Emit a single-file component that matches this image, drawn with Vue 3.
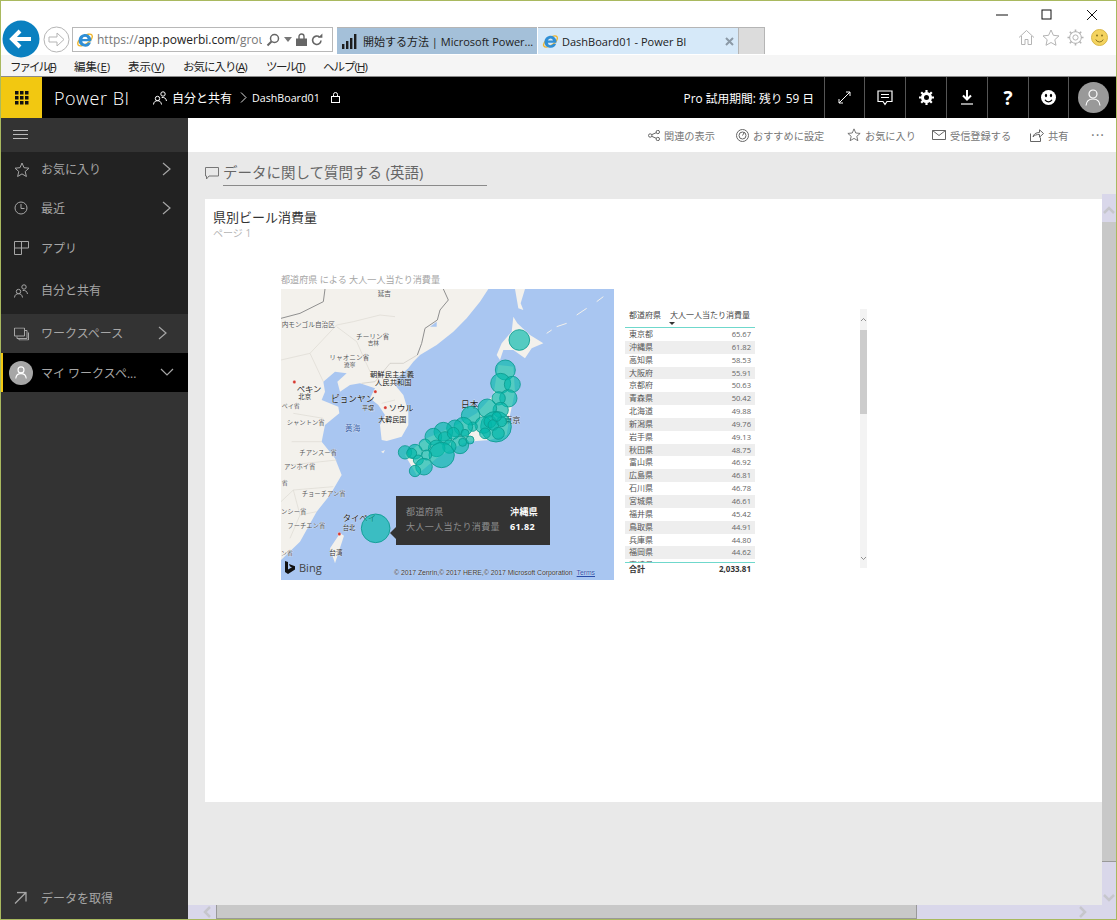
<script setup>
const menus = [
  { t: 'ファイル', k: 'F', w: 64, ls: '-2px' },
  { t: '編集', k: 'E', w: 54, ls: '0' },
  { t: '表示', k: 'V', w: 55, ls: '0' },
  { t: 'お気に入り', k: 'A', w: 83, ls: '-1px' },
  { t: 'ツール', k: 'T', w: 57, ls: '-1.6px' },
  { t: 'ヘルプ', k: 'H', w: 60, ls: '-1px' }
]
const rows = [
  ['東京都', '65.67'], ['沖縄県', '61.82'], ['高知県', '58.53'], ['大阪府', '55.91'], ['京都府', '50.63'],
  ['青森県', '50.42'], ['北海道', '49.88'], ['新潟県', '49.76'], ['岩手県', '49.13'], ['秋田県', '48.75'],
  ['富山県', '46.92'], ['広島県', '46.81'], ['石川県', '46.78'], ['宮城県', '46.61'], ['福井県', '45.42'],
  ['鳥取県', '44.91'], ['兵庫県', '44.80'], ['福岡県', '44.62'], ['宮崎県', '44.51']
]
const bubbles = [
  [718,165,31],[676,255,30],[662,295,30],[697,298,24],[685,340,26],[656,340,20],[662,375,23],[622,370,28],
  [572,392,28],[648,425,46],[610,420,25],[630,410,18],[640,420,16],[665,410,15],[650,395,14],[655,445,18],
  [615,445,16],[578,425,14],[550,425,28],[525,430,25],[555,445,12],[490,440,28],[460,455,25],[495,460,20],
  [520,445,18],[540,480,26],[548,472,12],[570,465,12],[508,485,20],[470,490,25],[485,510,38],[435,480,18],
  [440,510,15],[405,500,22],[375,502,20],[395,505,15],[415,525,15],[432,545,25],[405,558,17],[287,730,43]
]
const labels = [
  ['延吉', 293, 32, 20, '#555'], ['内モンゴル自治区', 5, 125, 20, '#555'], ['チーリン省', 228, 161, 20, '#555'],
  ['吉林', 263, 180, 17, '#555'], ['リャオニン省', 148, 226, 20, '#555'], ['遼寧', 192, 245, 17, '#555'],
  ['朝鮮民主主義', 270, 276, 22, '#222'], ['人民共和国', 285, 301, 22, '#222'], ['ペキン', 50, 321, 25, '#222'],
  ['北京', 55, 343, 19, '#333'], ['ピョンヤン', 153, 352, 26, '#222'], ['平壌', 246, 374, 18, '#333'],
  ['ソウル', 326, 378, 25, '#222'], ['大韓民国', 295, 412, 21, '#222'], ['黄海', 195, 439, 23, '#3b62a8'],
  ['日本', 543, 368, 26, '#222'], ['東京', 672, 414, 25, '#333'], ['ペイ省', 5, 370, 18, '#555'],
  ['シャントン省', 20, 419, 19, '#555'], ['チアンスー省', 58, 511, 19, '#555'], ['アンホイ省', 12, 552, 19, '#555'],
  ['チョーチアン省', 65, 634, 19, '#555'], ['ンシー省', 3, 688, 19, '#555'], ['フーチエン省', 22, 728, 19, '#555'],
  ['タイペイ', 188, 707, 25, '#222'], ['台北', 188, 735, 19, '#333'], ['台湾', 148, 811, 20, '#333'],
  ['ン省', 3, 810, 18, '#555'], ['省', 5, 600, 18, '#555']
]
const dots = [[43,291],[286,320],[316,368],[178,747]]
</script>

<template>
  <div class="window">
    <div class="caption">
      <svg class="caption-ico" width="12" height="2" viewBox="0 0 12 2"><path d="M0 1h12" stroke="#111"/></svg>
      <svg class="caption-ico" width="12" height="12" viewBox="0 0 12 12"><rect x="1" y="1" width="9" height="9" fill="none" stroke="#111"/></svg>
      <svg class="caption-ico" width="12" height="12" viewBox="0 0 12 12"><path d="M1 1l10 10M11 1L1 11" stroke="#111"/></svg>
    </div>

    <div class="navrow">
      <svg class="back" width="38" height="38" viewBox="0 0 38 38">
        <circle cx="19" cy="19" r="18.5" fill="#0a80c0"/>
        <path d="M29 19H11M18 11l-8 8 8 8" fill="none" stroke="#fff" stroke-width="4"/>
      </svg>
      <svg class="forward" width="27" height="27" viewBox="0 0 27 27">
        <circle cx="13.5" cy="13.5" r="12.5" fill="#fff" stroke="#b5b5b5"/>
        <path d="M6 11h8V7l7 6.5-7 6.5v-4H6z" fill="none" stroke="#b5b5b5"/>
      </svg>
      <div class="address">
        <svg width="18" height="18" viewBox="0 0 18 18">
          <ellipse cx="9" cy="9" rx="8.5" ry="4" fill="none" stroke="#f0b429" stroke-width="1.400" transform="rotate(-35 9 9)"/>
          <path d="M2.600 9.500a6.400 6.400 0 0 1 12.700-1.300v2H6.200a3 3 0 0 0 5.600 1.200h3.200A6.400 6.400 0 0 1 2.600 9.500zm3.700-1.600h5.400a2.800 2.800 0 0 0-5.400 0z" fill="#2f8fd6" fill-rule="evenodd"/>
        </svg>
        <span class="url"><i>https://</i>app.powerbi.com<i>/group</i></span>
        <svg class="addr-tool" width="14" height="14" viewBox="0 0 14 14"><circle cx="8.5" cy="5.5" r="4" fill="none" stroke="#666" stroke-width="1.5"/><path d="M5.5 8.5L1.5 12.5" stroke="#666" stroke-width="2"/></svg>
        <svg class="addr-tool" width="8" height="5" viewBox="0 0 8 5"><path d="M0 0h8L4 5z" fill="#777"/></svg>
        <svg class="addr-tool" width="11" height="13" viewBox="0 0 11 13"><path d="M3 6V3.5a2.5 2.5 0 0 1 5 0V6" fill="none" stroke="#666" stroke-width="1.4"/><rect y="5.5" width="11" height="7.5" fill="#666"/></svg>
        <svg class="addr-tool" width="12" height="13" viewBox="0 0 12 13"><path d="M10 7.5a4.2 4.2 0 1 1-1.4-3.4" fill="none" stroke="#666" stroke-width="1.6"/><path d="M7 4.8h4.4V.6z" fill="#666"/></svg>
      </div>
      <div class="tab tab-idle">
        <svg class="tab-ico" width="17" height="16" viewBox="0 0 17 16"><path d="M1 11h2.400v5H1zM5 8h2.400v8H5zM9 5h2.400v11H9zM13 1h2.400v15H13z" fill="#1d1d1d"/></svg>
        <span>開始する方法 | Microsoft Power...</span>
      </div>
      <div class="tab tab-active">
        <svg class="tab-ico" width="17" height="17" viewBox="0 0 18 18">
          <ellipse cx="9" cy="9" rx="8.5" ry="4" fill="none" stroke="#f0b429" stroke-width="1.400" transform="rotate(-35 9 9)"/>
          <path d="M2.600 9.500a6.400 6.400 0 0 1 12.700-1.300v2H6.200a3 3 0 0 0 5.600 1.200h3.200A6.400 6.400 0 0 1 2.600 9.500zm3.700-1.600h5.400a2.800 2.800 0 0 0-5.400 0z" fill="#2f8fd6" fill-rule="evenodd"/>
        </svg>
        <span class="tab-label">DashBoard01 - Power BI</span>
        <svg class="tab-ico" width="9" height="9" viewBox="0 0 9 9"><path d="M1 1l7 7M8 1L1 8" stroke="#8b99a6" stroke-width="2"/></svg>
      </div>
      <div class="tab-new"></div>
      <div class="tools">
        <svg width="17" height="17" viewBox="0 0 17 17"><path d="M1 8.5L8.5 1.5 16 8.5M3.5 7v8.500h3.500v-5h3v5h3.500V7" fill="none" stroke="#b4b4b4"/></svg>
        <svg width="18" height="17" viewBox="0 0 18 17"><path d="M9 1l2.400 5.300 5.600.6-4.200 3.800 1.200 5.600L9 13.500l-5 2.800 1.200-5.600L1 6.900l5.600-.6z" fill="none" stroke="#b4b4b4"/></svg>
        <svg width="17" height="17" viewBox="0 0 17 17"><circle cx="8.500" cy="8.500" r="2.600" fill="none" stroke="#b4b4b4"/><circle cx="8.500" cy="8.500" r="5.800" fill="none" stroke="#b4b4b4"/><path d="M8.500 .5v2.500M8.500 14v2.500M.5 8.500H3M14 8.500h2.500M2.800 2.800l1.800 1.800M12.400 12.400l1.800 1.800M14.200 2.800l-1.800 1.800M4.600 12.400l-1.800 1.800" stroke="#b4b4b4" stroke-width="1.600"/></svg>
        <svg width="17" height="17" viewBox="0 0 17 17"><circle cx="8.500" cy="8.500" r="8" fill="#f4d35e" stroke="#d9b84a"/><circle cx="6" cy="6.500" r="1" fill="#8a7420"/><circle cx="11" cy="6.500" r="1" fill="#8a7420"/><path d="M4.800 10.500a4 4 0 0 0 7.400 0" fill="none" stroke="#8a7420"/></svg>
      </div>
    </div>

    <div class="menubar">
      <span v-for="m in menus" :key="m.k" class="menu-item" :style="{ width: m.w + 'px', letterSpacing: m.ls }">{{ m.t }}(<u>{{ m.k }}</u>)</span>
    </div>

    <header class="appbar">
      <div class="waffle">
        <svg width="14" height="14" viewBox="0 0 14 14" fill="#111">
          <path d="M0 0h3.500v3.500H0zM5 0h3.500v3.500H5zM10 0h3.500v3.500H10zM0 5h3.500v3.500H0zM5 5h3.500v3.500H5zM10 5h3.500v3.500H10zM0 10h3.500v3.500H0zM5 10h3.500v3.500H5zM10 10h3.500v3.500H10z"/>
        </svg>
      </div>
      <span class="brand">Power BI</span>
      <svg class="crumb-ico" width="14" height="14" viewBox="0 0 14 14" fill="none" stroke="#fff"><circle cx="4.500" cy="7.500" r="2.200"/><path d="M.5 13.500c.3-2.700 1.800-3.800 4-3.800s3.600 1.100 4 3.800"/><circle cx="10" cy="3" r="2.200"/><path d="M8.700 6.500c2.300-.5 4.400.6 4.800 3.500"/></svg>
      <span class="crumb">自分と共有</span>
      <svg class="crumb-chev" width="7" height="11" viewBox="0 0 7 11"><path d="M1 .5l5 5-5 5" fill="none" stroke="#ddd"/></svg>
      <span class="crumb-sub">DashBoard01</span>
      <svg class="crumb-lock" width="9" height="11" viewBox="0 0 9 11" fill="none" stroke="#fff"><rect x=".5" y="4.500" width="8" height="6"/><path d="M2.500 4.500V2.500a2 2 0 0 1 4 0v2"/></svg>
      <span class="trial">Pro 試用期間: 残り 59 日</span>
      <div class="cell c40">
        <svg width="13" height="13" viewBox="0 0 13 13" fill="none" stroke="#fff"><path d="M1 12L12 1M8 1h4v4M1 8v4h4"/></svg>
      </div>
      <div class="cell c41">
        <svg width="16" height="16" viewBox="0 0 16 16" fill="none" stroke="#fff" stroke-width="1.200"><path d="M1 1h14v10.500h-5L8 14.500l-2-3H1zM4 4.500h8M4 7.500h8"/></svg>
      </div>
      <div class="cell c41">
        <svg width="15" height="15" viewBox="0 0 15 15"><circle cx="7.500" cy="7.500" r="4" fill="none" stroke="#fff" stroke-width="3"/><path d="M7.500 0v3M7.500 12v3M0 7.500h3M12 7.500h3M2.200 2.200l2 2M10.800 10.800l2 2M12.800 2.200l-2 2M4.200 10.800l-2 2" stroke="#fff" stroke-width="2.200"/></svg>
      </div>
      <div class="cell c41">
        <svg width="12" height="15" viewBox="0 0 12 15"><path d="M6 0v9M2 5.500l4 4 4-4" fill="none" stroke="#fff" stroke-width="2"/><path d="M0 14h12" stroke="#fff" stroke-width="1.200"/></svg>
      </div>
      <div class="cell c41 q">?</div>
      <div class="cell c40">
        <svg width="15" height="15" viewBox="0 0 15 15"><circle cx="7.500" cy="7.500" r="7.500" fill="#fff"/><ellipse cx="5" cy="5.500" rx="1.100" ry="1.800" fill="#000"/><ellipse cx="10" cy="5.500" rx="1.100" ry="1.800" fill="#000"/><path d="M4 9.800a4 4 0 0 0 7 0" fill="none" stroke="#000" stroke-width="1.300"/></svg>
      </div>
      <div class="cell cavatar">
        <div class="avatar">
          <svg width="16" height="17" viewBox="0 0 16 17" fill="none" stroke="#fff" stroke-width="1.200"><circle cx="8" cy="5" r="4"/><path d="M1 16.500c.4-4 3-6.500 7-6.500s6.600 2.500 7 6.500"/></svg>
        </div>
      </div>
    </header>

    <div class="main">
      <aside class="sidebar">
        <div class="side-burger">
          <svg width="15" height="10" viewBox="0 0 15 10"><path d="M0 .5h15M0 4.500h15M0 8.500h15" stroke="#bbb"/></svg>
        </div>
        <nav class="side-top">
          <div class="side-item h36">
            <svg class="side-ico" width="16" height="16" viewBox="0 0 16 16"><path d="M8 1l2 4.700 5 .5-3.800 3.300 1.200 5L8 11.900l-4.400 2.600 1.200-5L1 6.200l5-.5z" fill="none" stroke="#a6a6a6"/></svg>
            <span class="side-text">お気に入り</span>
            <svg class="side-chev" width="9" height="14" viewBox="0 0 9 14"><path d="M1 1l7 6-7 6" fill="none" stroke="#a6a6a6" stroke-width="1.200"/></svg>
          </div>
          <div class="side-item h40">
            <svg class="side-ico" width="14" height="14" viewBox="0 0 14 14"><circle cx="7" cy="7" r="6" fill="none" stroke="#a6a6a6"/><path d="M7 3v4.500h3.500" fill="none" stroke="#a6a6a6"/></svg>
            <span class="side-text">最近</span>
            <svg class="side-chev" width="9" height="14" viewBox="0 0 9 14"><path d="M1 1l7 6-7 6" fill="none" stroke="#a6a6a6" stroke-width="1.200"/></svg>
          </div>
          <div class="side-item h40">
            <svg class="side-ico" width="15" height="14" viewBox="0 0 15 14"><path d="M.5.500h14v6.500H.5zM7.500.500v13H.5V7" fill="none" stroke="#a6a6a6"/></svg>
            <span class="side-text">アプリ</span>
          </div>
          <div class="side-item h46">
            <svg class="side-ico" width="14" height="14" viewBox="0 0 14 14" fill="none" stroke="#a6a6a6"><circle cx="4.500" cy="7.500" r="2.200"/><path d="M.5 13.500c.3-2.700 1.800-3.800 4-3.800s3.600 1.100 4 3.800"/><circle cx="10" cy="3" r="2.200"/><path d="M8.700 6.500c2.300-.5 4.400.6 4.800 3.500"/></svg>
            <span class="side-text">自分と共有</span>
          </div>
        </nav>
        <div class="side-item workspaces">
          <svg class="side-ico" width="15" height="13" viewBox="0 0 15 13" fill="none" stroke="#a6a6a6"><path d="M.5.500h10v8H.5z"/><path d="M3 9v2h10V3h-2"/><path d="M5 11.500v1h9.500V5"/></svg>
          <span class="side-text">ワークスペース</span>
          <svg class="side-chev-ws" width="9" height="14" viewBox="0 0 9 14"><path d="M1 1l7 6-7 6" fill="none" stroke="#a6a6a6" stroke-width="1.200"/></svg>
        </div>
        <div class="side-item myws">
          <div class="myws-avatar">
            <svg width="12" height="13" viewBox="0 0 16 17" fill="none" stroke="#fff" stroke-width="1.500"><circle cx="8" cy="5" r="4"/><path d="M1 16.500c.4-4 3-6.500 7-6.500s6.600 2.500 7 6.500"/></svg>
          </div>
          <span class="side-text myws-text">マイ ワークスペ...</span>
          <svg class="side-down" width="14" height="9" viewBox="0 0 14 9"><path d="M1 1l6 6 6-6" fill="none" stroke="#a6a6a6" stroke-width="1.200"/></svg>
        </div>
        <div class="side-bottom">
          <svg class="side-ico" width="13" height="13" viewBox="0 0 13 13"><path d="M1 12L12 1M3 1h9v9" fill="none" stroke="#a6a6a6" stroke-width="1.300"/></svg>
          <span class="side-text">データを取得</span>
        </div>
      </aside>

      <section class="content">
        <div class="actions">
          <span class="act w1">
            <svg width="12" height="11" viewBox="0 0 12 11" fill="none" stroke="#666"><circle cx="2.200" cy="5.500" r="1.700"/><circle cx="9.800" cy="2" r="1.700"/><circle cx="9.800" cy="9" r="1.700"/><path d="M3.700 4.700l4.500-2M3.700 6.300l4.500 2"/></svg>
            関連の表示
          </span>
          <span class="act w2">
            <svg width="13" height="13" viewBox="0 0 13 13" fill="none" stroke="#666"><circle cx="6.500" cy="6.500" r="6"/><circle cx="6.500" cy="6.500" r="3.500"/><path d="M6.500 6.500l2-3.500"/></svg>
            おすすめに設定
          </span>
          <span class="act w3">
            <svg width="14" height="14" viewBox="0 0 16 16"><path d="M8 1l2 4.700 5 .5-3.800 3.300 1.200 5L8 11.900l-4.400 2.600 1.200-5L1 6.200l5-.5z" fill="none" stroke="#666"/></svg>
            お気に入り
          </span>
          <span class="act w4">
            <svg width="14" height="10" viewBox="0 0 14 10" fill="none" stroke="#666"><path d="M.5.500h13v9H.5zM.5.500L7 5.500l6.500-5"/></svg>
            受信登録する
          </span>
          <span class="act w5">
            <svg width="14" height="13" viewBox="0 0 14 13" fill="none" stroke="#666"><path d="M.5 4.500v8h10V8.500M3 8c.5-3 3-4.500 6.500-4.500V.8l4 3.700-4 3.700V5.500C6.500 5.500 4.500 6 3 8z"/></svg>
            共有
          </span>
          <span class="dots">···</span>
        </div>

        <div class="body">
          <div class="canvas">
            <div class="qna">
              <svg width="14" height="13" viewBox="0 0 14 13"><path d="M.5.500h13v8.500H4L1.500 12V9H.5z" fill="none" stroke="#777"/></svg>
              <span class="qna-text">データに関して質問する (英語)</span>
            </div>
            <div class="panel">
              <div class="panel-title">県別ビール消費量</div>
              <div class="panel-sub">ページ 1</div>
              <div class="visuals">
                <div class="map-col">
                  <div class="map-title">都道府県 による 大人一人当たり消費量</div>
                  <div class="map">
                    <svg class="map-svg" width="333" height="291" viewBox="3 12 999 873">
                      <rect x="3" y="12" width="999" height="873" fill="#a9c6f1"/>
                      <path fill="#f3f1ec" d="M3 12H625L600 50 560 100 520 140 470 180 420 210 400 230 385 250 350 280 345 300 370 330 385 380 385 420 365 455 320 468 305 465 300 420 315 390 295 360 270 340 285 310 240 295 210 300 180 320 172 290 200 265 165 260 130 290 135 320 125 345 175 365 178 385 135 420 125 470 165 520 185 570 150 630 110 680 60 770 3 825z"/>
                      <path fill="#f3f1ec" d="M700 95L712 115 750 150 790 175 755 190 735 220 700 195 670 195 660 225 650 210 665 175 695 140ZM705 12H735L722 55 730 75 715 70ZM655 240L700 245 705 320 690 390 680 450 630 465 560 470 520 490 470 520 410 570 375 510 440 460 530 420 590 385 640 330ZM180 745L192 752 165 835 150 790ZM303 500L315 495 310 505Z"/>
                      <path d="M920 70L890 90M970 35L950 50M860 115L830 125M815 135L800 145" stroke="#f3f1ec" stroke-width="3" fill="none"/>
                      <path d="M135 12L130 50 60 85 3 100" fill="none" stroke="#8f8f8f" stroke-width="3"/>
                      <path d="M490 12L505 45 480 75 472 105 435 130 425 175 412 210" fill="none" stroke="#8f8f8f" stroke-width="3"/>
                      <path d="M412 210L370 235 330 235 285 290 245 295" fill="none" stroke="#c9c6bf" stroke-width="2"/>
                      <path d="M305 355L345 345M3 225L90 205 170 120 220 110 300 90 345 95M170 125L230 170 270 260M90 205L130 290M40 385L130 400M35 470L125 470M30 540L170 525M40 615L160 605M60 690L110 680M3 650L40 615 60 690 30 760" fill="none" stroke="#dcd9d2" stroke-width="2"/>
                      <path d="M470 110L450 125 470 125Z" fill="#a9c6f1"/>
                      <circle v-for="(d, i) in dots" :key="'d' + i" :cx="d[0]" :cy="d[1]" r="5" fill="#d6392f" stroke="#fff"/>
                      <text v-for="l in labels" :key="l[0] + l[1]" class="map-label" :x="l[1]" :y="l[2]" :font-size="l[3]" :fill="l[4]">{{ l[0] }}</text>
                      <circle v-for="(b, i) in bubbles" :key="i" :cx="b[0]" :cy="b[1]" :r="b[2]" fill="#01b8aa" fill-opacity=".66" stroke="#0a9a8e" stroke-width="2.500"/>
                    </svg>
                    <div class="tooltip">
                      <div class="tip-row"><span class="tip-k">都道府県</span><b>沖縄県</b></div>
                      <div class="tip-row"><span class="tip-k">大人一人当たり消費量</span><b>61.82</b></div>
                    </div>
                    <div class="bing">
                      <svg width="10" height="13" viewBox="0 0 10 13"><path d="M0 0l3 1v7.500l4-2.200-2-.9L4 3l6 2.200v3.200L3 13 0 11z" fill="#111"/></svg>
                      <span>Bing</span>
                    </div>
                    <div class="copyright">© 2017 Zenrin,© 2017 HERE,© 2017 Microsoft Corporation <u>Terms</u></div>
                  </div>
                </div>
                <div class="table">
                  <div class="thead">
                    <span>都道府県</span>
                    <span class="thead-2">大人一人当たり消費量</span>
                    <i class="sort"></i>
                  </div>
                  <div class="tbody">
                    <div v-for="r in rows" :key="r[0]" class="trow"><span>{{ r[0] }}</span><span class="num">{{ r[1] }}</span></div>
                  </div>
                  <div class="tfoot"><span>合計</span><span>2,033.81</span></div>
                </div>
                <div class="vis-scroll">
                  <svg class="vis-arrow" width="5" height="3" viewBox="0 0 5 3"><path d="M0 3l2.500-2.500L5 3" fill="none" stroke="#777" stroke-width=".8"/></svg>
                  <div class="vis-thumb"></div>
                  <svg class="vis-arrow-d" width="5" height="3" viewBox="0 0 5 3"><path d="M0 0l2.500 2.500L5 0" fill="none" stroke="#777" stroke-width=".8"/></svg>
                </div>
              </div>
            </div>
          </div>
          <div class="vscroll">
            <div class="vs-btn">
              <svg width="12" height="8" viewBox="0 0 12 8"><path d="M1 7l5-5 5 5" fill="none" stroke="#c6c6cc" stroke-width="2.500"/></svg>
            </div>
            <div class="vs-thumb"></div>
            <div class="vs-track">
              <svg width="12" height="8" viewBox="0 0 12 8"><path d="M1 1l5 5 5-5" fill="none" stroke="#c6c6cc" stroke-width="2.500"/></svg>
            </div>
          </div>
        </div>
        <div class="hscroll">
          <svg class="hs-left" width="8" height="12" viewBox="0 0 8 12"><path d="M7 1L2 6l5 5" fill="none" stroke="#c6c6cc" stroke-width="2.500"/></svg>
          <div class="hs-thumb"></div>
          <svg class="hs-right" width="8" height="12" viewBox="0 0 8 12"><path d="M1 1l5 5-5 5" fill="none" stroke="#c6c6cc" stroke-width="2.500"/></svg>
        </div>
      </section>
    </div>
  </div>
</template>

<style>
html, body { margin: 0; padding: 0; background: #fff; }
</style>

<style scoped>
.window {
  box-sizing: border-box;
  width: 1117px;
  height: 920px;
  border: 1px solid #a9b95f;
  display: flex;
  flex-direction: column;
  overflow: hidden;
  font-family: "Open Sans", "Noto Sans CJK JP", sans-serif;
  background: #fff;
}
.caption {
  height: 26px;
  flex: none;
  display: flex;
  align-items: center;
  justify-content: flex-end;
  gap: 33px;
  padding: 2px 18px 0 0;
  box-sizing: border-box;
}
.navrow {
  height: 28px;
  flex: none;
  display: flex;
  align-items: flex-start;
  position: relative;
}
.back { margin: -7px 0 0 1px; flex: none; }
.forward { margin: -1px 0 0 3px; flex: none; }
.address {
  box-sizing: border-box;
  width: 261px;
  height: 25px;
  margin: 0 0 0 2px;
  border: 1px solid #b8b8b8;
  display: flex;
  align-items: center;
  padding-left: 3px;
  background: #fff;
  flex: none;
}
.url {
  width: 165px;
  margin-left: 3px;
  overflow: hidden;
  white-space: nowrap;
  font-size: 12px;
  color: #222;
}
.url i { font-style: normal; color: #777; }
.addr-tool { margin-left: 4px; flex: none; }
.tab {
  height: 27px;
  box-sizing: border-box;
  display: flex;
  align-items: center;
  font-size: 11px;
  color: #222;
  white-space: nowrap;
  flex: none;
  border-top: 1px solid #b5b5b5;
}
.tab-ico { flex: none; }
.tab-idle {
  width: 200px;
  margin-left: 4px;
  padding-left: 4px;
  gap: 5px;
  background: #a4c0d9;
  overflow: hidden;
}
.tab-active {
  width: 200px;
  margin-left: 1px;
  padding-left: 4px;
  background: #d6e9f9;
  gap: 3px;
}
.tab-label { width: 160px; }
.tab-new {
  width: 27px;
  height: 27px;
  box-sizing: border-box;
  flex: none;
  background: #dcdcdc;
  border: 1px solid #b5b5b5;
  border-bottom: 0;
}
.tools {
  margin-left: auto;
  display: flex;
  gap: 7px;
  padding: 2px 8px 0 0;
}
.menubar {
  height: 22px;
  flex: none;
  background: #f5f5f5;
  display: flex;
  align-items: center;
  padding-left: 9px;
  font-size: 11.5px;
  color: #222;
  box-sizing: border-box;
  border-bottom: 1px solid #8a8a8a;
}
.menu-item { flex: none; white-space: nowrap; }
.appbar {
  height: 41px;
  flex: none;
  background: #000;
  color: #fff;
  display: flex;
  align-items: center;
}
.waffle {
  width: 41px;
  height: 41px;
  flex: none;
  background: #f2c811;
  display: flex;
  align-items: center;
  justify-content: center;
}
.brand { margin-left: 12px; font-size: 18px; font-weight: 300; letter-spacing: .5px; width: 99px; flex: none; white-space: nowrap; }
.crumb-ico { flex: none; margin-right: 5px; }
.crumb { font-size: 12px; flex: none; width: 60px; white-space: nowrap; }
.crumb-chev { margin: 0 5px 0 8px; flex: none; }
.crumb-sub { font-size: 10.700px; flex: none; width: 68px; white-space: nowrap; }
.crumb-lock { margin-left: 11px; flex: none; }
.trial { margin-left: auto; font-size: 11.800px; padding-right: 10px; white-space: nowrap; }
.cell {
  height: 41px;
  box-sizing: border-box;
  border-left: 1px solid #555;
  display: flex;
  align-items: center;
  justify-content: center;
  flex: none;
}
.c40 { width: 40px; }
.c41 { width: 41px; }
.q { font-size: 19px; font-weight: 700; }
.cavatar { width: 48px; padding-left: 1px; }
.avatar {
  width: 31px;
  height: 31px;
  border-radius: 50%;
  background: #999;
  display: flex;
  align-items: center;
  justify-content: center;
}
.main { flex: 1; min-height: 0; display: flex; }
.sidebar {
  width: 187px;
  flex: none;
  background: #333;
  display: flex;
  flex-direction: column;
  color: #a6a6a6;
}
.side-burger { height: 34px; display: flex; align-items: center; padding-left: 12px; box-sizing: border-box; flex: none; }
.side-top { background: #222; flex: none; }
.side-item { position: relative; display: flex; align-items: center; box-sizing: border-box; }
.h36 { height: 36px; padding-bottom: 2px; }
.h40 { height: 40px; }
.h46 { height: 46px; padding-bottom: 2px; }
.side-ico { position: absolute; left: 13px; top: 50%; transform: translateY(-50%); }
.side-text { margin-left: 40px; font-size: 12px; white-space: nowrap; }
.side-chev { margin-left: auto; margin-right: 17px; }
.workspaces { height: 39px; flex: none; padding-bottom: 2px; }
.side-chev-ws { margin-left: auto; margin-right: 21px; }
.myws { height: 39px; flex: none; background: #000; border-left: 2px solid #f2c811; }
.myws-avatar {
  width: 24px;
  height: 24px;
  margin-left: 6px;
  border-radius: 50%;
  background: #a6a6a6;
  display: flex;
  align-items: center;
  justify-content: center;
  flex: none;
}
.myws-text { margin-left: 8px; }
.side-down { margin-left: auto; margin-right: 14px; }
.side-bottom { position: relative; margin-top: auto; height: 42px; display: flex; align-items: center; box-sizing: border-box; }
.content { flex: 1; min-width: 0; display: flex; flex-direction: column; background: #e9e9e9; }
.actions {
  height: 34px;
  flex: none;
  background: #fff;
  display: flex;
  align-items: center;
  font-size: 10.200px;
  color: #777;
  padding-left: 460px;
  box-sizing: border-box;
  white-space: nowrap;
}
.act { display: flex; align-items: center; gap: 4px; flex: none; }
.w1 { width: 88px; }
.w2 { width: 111px; }
.w3 { width: 85px; }
.w4 { width: 98px; }
.w5 { width: 61px; }
.dots { font-size: 14px; letter-spacing: 1px; line-height: 1; }
.body { flex: 1; min-height: 0; display: flex; }
.canvas { flex: 1; min-width: 0; display: flex; flex-direction: column; }
.qna { height: 47px; flex: none; display: flex; align-items: flex-start; padding: 15px 0 0 17px; box-sizing: border-box; }
.qna svg { margin-top: 0; flex: none; }
.qna-text {
  box-sizing: border-box;
  width: 264px;
  margin-left: 4px;
  margin-top: -5px;
  height: 24px;
  font-size: 14.500px;
  line-height: 22px;
  color: #666;
  border-bottom: 1px solid #8a8a8a;
  white-space: nowrap;
}
.panel {
  box-sizing: border-box;
  height: 603px;
  margin-left: 17px;
  padding: 9px 0 0 8px;
  background: #fff;
  flex: none;
}
.panel-title { font-size: 13px; line-height: 19px; color: #333; }
.panel-sub { font-size: 10px; line-height: 13px; color: #b5b5b5; }
.visuals { display: flex; align-items: flex-start; margin: 34px 0 0 68px; }
.map-col { width: 333px; flex: none; }
.map-title { font-size: 9.100px; line-height: 11px; height: 15px; color: #a6a6a6; white-space: nowrap; }
.map { position: relative; width: 333px; height: 291px; overflow: hidden; }
.map-svg { display: block; }
.map-label { font-family: "Noto Sans CJK JP", sans-serif; paint-order: stroke; stroke: rgba(255,255,255,.55); stroke-width: 2px; }
.tooltip {
  position: absolute;
  left: 115px;
  top: 207px;
  width: 154px;
  height: 49px;
  box-sizing: border-box;
  padding: 8px 10px 0;
  background: #333;
  color: #fff;
  font-size: 9px;
  line-height: 15px;
  letter-spacing: .4px;
}
.tooltip::before {
  content: "";
  position: absolute;
  left: -6px;
  top: 31px;
  border: 6px solid transparent;
  border-left: 0;
  border-right-color: #333;
}
.tip-row { display: flex; white-space: nowrap; }
.tip-k { width: 104px; color: #8c8c8c; }
.bing {
  position: absolute;
  left: 4px;
  bottom: 6px;
  display: flex;
  align-items: flex-end;
  gap: 4px;
  font-size: 11px;
  line-height: 13px;
  color: #444;
}
.copyright {
  position: absolute;
  left: 113px;
  bottom: 3px;
  font-family: "Liberation Sans", sans-serif;
  font-size: 6.800px;
  line-height: 9px;
  color: #333;
  white-space: nowrap;
  text-shadow: 0 0 1px #fff;
}
.copyright u { color: #2a4ca8; margin-left: 2px; }
.table { width: 130px; margin: 35px 0 0 11px; flex: none; font-size: 8px; color: #555; }
.thead {
  position: relative;
  height: 18px;
  padding: 0 0 0 4px;
  box-sizing: border-box;
  line-height: 11px;
  white-space: nowrap;
  color: #444;
}
.thead-2 { margin-left: 9px; }
.sort {
  position: absolute;
  left: 44px;
  top: 13px;
  border: 3px solid transparent;
  border-top: 3px solid #333;
  border-bottom: 0;
}
.tbody { height: 236px; border-top: 1px solid #6fd8cc; border-bottom: 1px solid #6fd8cc; overflow: hidden; box-sizing: border-box; }
.trow { height: 12.850px; line-height: 12.850px; display: flex; justify-content: space-between; padding: 0 4px; }
.trow:nth-child(even) { background: #eeeeee; }
.num { font-size: 7.600px; color: #666; }
.tfoot { display: flex; justify-content: space-between; padding: 0 4px; line-height: 11px; font-weight: 700; color: #333; }
.vis-scroll {
  position: relative;
  width: 7px;
  height: 259px;
  margin: 35px 0 0 105px;
  background: #f3f3f3;
  flex: none;
}
.vis-arrow { position: absolute; left: 1px; top: 9px; }
.vis-arrow-d { position: absolute; left: 1px; bottom: 8px; }
.vis-thumb { position: absolute; left: 0; top: 21px; width: 7px; height: 84px; background: #ccc; }
.vscroll { width: 14px; flex: none; margin-top: 42px; display: flex; flex-direction: column; background: #d9d7ea; }
.vs-btn { height: 28px; flex: none; display: flex; align-items: center; justify-content: center; padding-top: 4px; box-sizing: border-box; }
.vs-thumb { height: 640px; flex: none; background: #c8c8c8; border-bottom: 1px solid #999; box-sizing: border-box; }
.vs-track { flex: 1; display: flex; align-items: flex-end; justify-content: center; padding-bottom: 3px; }
.hscroll { height: 14px; flex: none; display: flex; align-items: center; background: #d9d7ea; }
.hs-left { margin-left: 15px; flex: none; }
.hs-thumb { height: 14px; width: 701px; margin-left: 5px; flex: none; background: #c8c8c8; border-left: 1px solid #999; border-right: 1px solid #999; border-bottom: 1px solid #999; box-sizing: border-box; }
.hs-right { margin-left: 162px; flex: none; }
</style>
